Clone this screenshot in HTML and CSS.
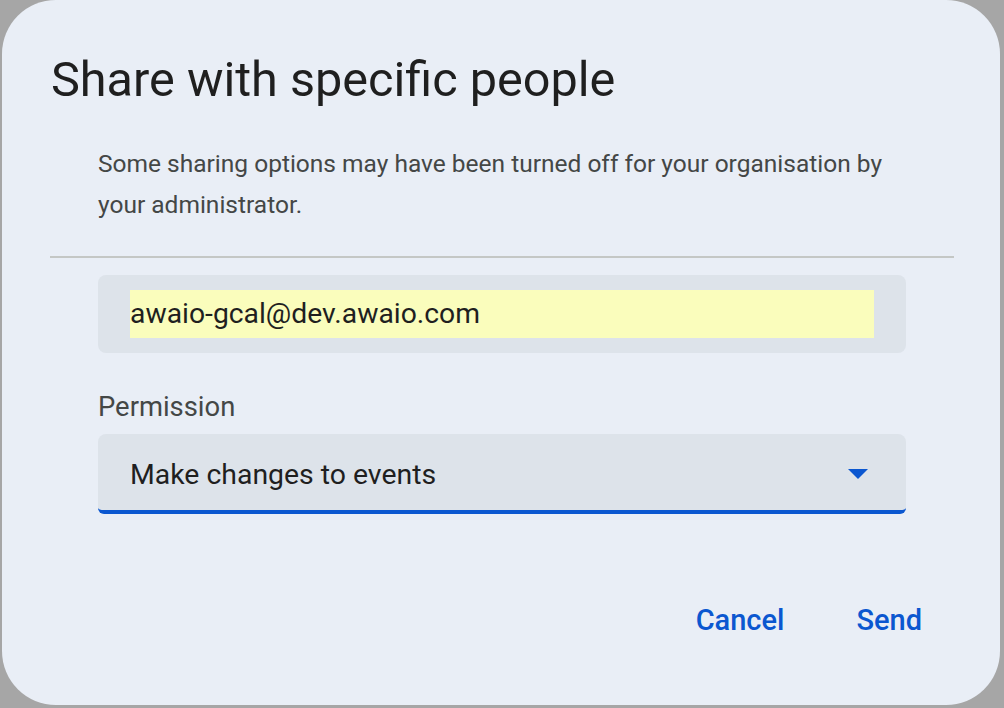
FILE: index.html
```html
<!DOCTYPE html>
<html lang="en">
<head>
<meta charset="utf-8">
<title>Share with specific people</title>
<link rel="stylesheet" href="styles.css">
</head>
<body>
<div class="backdrop">
  <div class="dialog" role="dialog" aria-labelledby="share-title">
    <h1 class="dialog-title" id="share-title">Share with specific people</h1>
    <p class="notice">Some sharing options may have been turned off for your organisation by your administrator.</p>
    <hr class="divider">
    <div class="fields">
      <div class="text-field">
        <span class="autofill">awaio-gcal@dev.awaio.com</span>
      </div>
      <label class="field-label">Permission</label>
      <div class="select-field">
        <span class="select-value">Make changes to events</span>
        <svg class="select-arrow" width="20" height="10" viewBox="0 0 20 10" aria-hidden="true">
          <path d="M0 0 L20 0 L10 10 Z" fill="#0b57d0"/>
        </svg>
      </div>
    </div>
    <div class="actions">
      <button class="text-button">Cancel</button>
      <button class="text-button">Send</button>
    </div>
  </div>
</div>
</body>
</html>
```
FILE: styles.css
```css
html, body {
  margin: 0;
  padding: 0;
  height: 100%;
}

body {
  background: #a6a6a6;
  font-family: "Roboto", "Open Sans", sans-serif;
  overflow: hidden;
}

.backdrop {
  padding-left: 2px;
}

.dialog {
  width: 998px;
  height: 705px;
  box-sizing: border-box;
  background: #e9eef6;
  border-radius: 54px;
  padding: 0 46px 0 48px;
  display: flex;
  flex-direction: column;
}

.dialog-title {
  margin: 52px 0 0 1px;
  font-size: 48.6px;
  line-height: 56px;
  font-weight: 400;
  color: #1f1f1f;
}

.notice {
  margin: 35px 0 0 48px;
  max-width: 800px;
  font-size: 24.5px;
  line-height: 41px;
  color: #444746;
}

.divider {
  margin: 31px 0 0 0;
  border: 0;
  height: 2px;
  background: #c4c7c5;
}

.fields {
  padding: 0 48px;
  display: flex;
  flex-direction: column;
}

.text-field {
  margin-top: 17px;
  height: 78px;
  box-sizing: border-box;
  background: #dde3ea;
  border-radius: 8px;
  padding: 15px 32px;
}

.autofill {
  display: block;
  height: 48px;
  background: #fafdbc;
  font-size: 28.3px;
  line-height: 48px;
  color: #1f1f1f;
}

.field-label {
  margin-top: 38px;
  font-size: 27.4px;
  line-height: 32px;
  color: #444746;
}

.select-field {
  margin-top: 11px;
  height: 80px;
  box-sizing: border-box;
  background: #dde3ea;
  border-radius: 8px 8px 6px 6px;
  border-bottom: 4px solid #0b57d0;
  padding: 4px 38px 0 32px;
  display: flex;
  align-items: center;
  justify-content: space-between;
}

.select-value {
  font-size: 28.4px;
  color: #1f1f1f;
}

.select-arrow {
  display: block;
}

.actions {
  margin-top: auto;
  margin-bottom: 68px;
  display: flex;
  justify-content: flex-end;
  gap: 48px;
  padding-right: 20px;
}

.text-button {
  background: none;
  border: 0;
  padding: 0 12px;
  font-family: inherit;
  font-size: 29px;
  line-height: 34px;
  font-weight: 500;
  color: #0b57d0;
  cursor: pointer;
}
```
